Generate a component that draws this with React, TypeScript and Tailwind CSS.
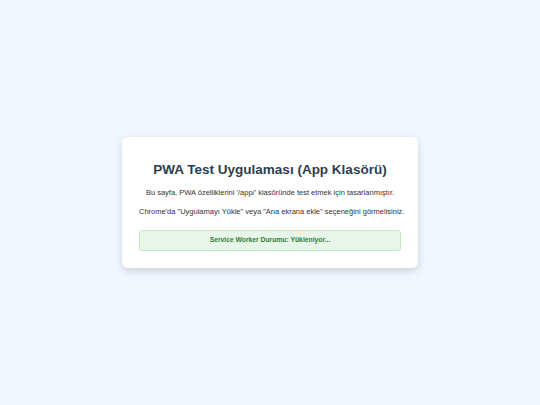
export default function App() {
  return (
    <div className="w-[540px] h-[405px] bg-[#f0f7ff] flex items-center justify-center" style={{ fontFamily: '"Liberation Sans", Arial, sans-serif' }}>
      <div className="w-[296px] bg-white rounded-[6px] shadow-[0_3px_8px_rgba(0,0,0,0.15)] px-[17px] pt-[24.5px] pb-[17px] text-center">
        <h1 className="text-[13.5px] font-bold text-[#2c3e50] leading-[16px]">PWA Test Uygulaması (App Klasörü)</h1>
        <p className="mt-[10.8px] text-[7.5px] text-[#333] leading-[10px] whitespace-nowrap">Bu sayfa, PWA özelliklerini '/app/' klasöründe test etmek için tasarlanmıştır.</p>
        <p className="mt-[8.7px] text-[7.5px] text-[#333] leading-[10px] whitespace-nowrap">Chrome'da "Uygulamayı Yükle" veya "Ana ekrana ekle" seçeneğini görmelisiniz.</p>
        <div className="mt-[12.9px] h-[21px] flex items-center justify-center bg-[#e8f5e9] border border-[#c8e6c9] rounded-[3px] text-[6.75px] font-bold text-[#2e7d32]">Service Worker Durumu: Yükleniyor...</div>
      </div>
    </div>
  );
}
